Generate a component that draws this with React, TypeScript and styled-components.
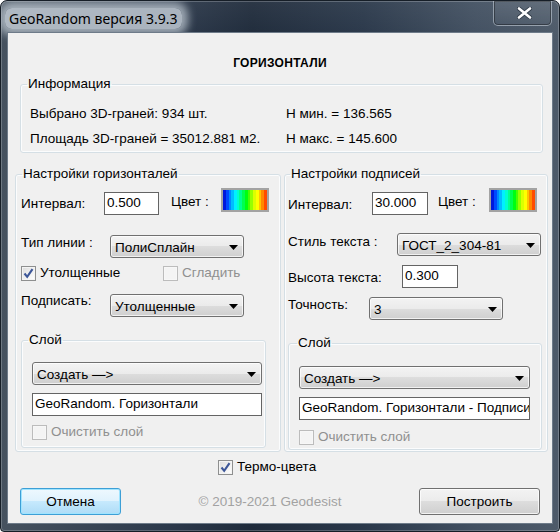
import styled, { createGlobalStyle } from 'styled-components';

const GlobalStyle = createGlobalStyle`
  html, body { margin: 0; padding: 0; background: #fff; }
  body {
    font-family: 'Liberation Sans', Arial, sans-serif;
    font-size: 13.5px;
    color: #000;
  }
  * { box-sizing: border-box; }
`;

const stripeColors = [
  '#0018dc', '#0048ff', '#0088ff', '#00bcff', '#00f0ff', '#00ffd0', '#00ff90', '#00ff50',
  '#00ff10', '#48ff00', '#98ff00', '#dcff00', '#ffff00', '#ffc400', '#ff8800', '#ff4c00',
];
const stripes = `linear-gradient(90deg, ${stripeColors
  .map((c, i) => `${c} ${((i * 100) / stripeColors.length).toFixed(2)}% ${(((i + 1) * 100) / stripeColors.length).toFixed(2)}%`)
  .join(', ')})`;

const Window = styled.div`
  width: 560px;
  height: 532px;
  display: flex;
  flex-direction: column;
  padding: 0 7px 8px;
  border: 1px solid #161e27;
  border-radius: 7px 7px 4px 4px;
  overflow: hidden;
  background:
    linear-gradient(180deg, rgba(255, 255, 255, 0.06), rgba(0, 0, 0, 0) 40px),
    linear-gradient(90deg, #46525f 0%, #2c394b 30%, #1f2b3b 45%, #2a384a 65%, #425061 85%, #4d5a69 100%);
  box-shadow: inset 0 0 0 1px rgba(255, 255, 255, 0.22);
`;

const TitleBar = styled.div`
  height: 32px;
  flex: none;
  display: flex;
  justify-content: space-between;
  align-items: flex-start;
`;

const Title = styled.span`
  margin: 7px 0 0 -3px;
  padding: 1px 4px;
  font-family: 'Noto Sans', 'Open Sans', sans-serif;
  font-size: 14px;
  line-height: 19px;
  color: #000;
  border-radius: 7px;
  background: rgba(204, 213, 222, 0.78);
  box-shadow: 0 0 8px 6px rgba(204, 213, 222, 0.7);
`;

const CloseButton = styled.div`
  width: 59px;
  height: 25px;
  display: flex;
  align-items: center;
  justify-content: center;
  padding-left: 3px;
  border: 1px solid rgba(200, 210, 220, 0.55);
  border-top: none;
  border-radius: 0 0 5px 5px;
  background: linear-gradient(180deg, rgba(255, 255, 255, 0.08), rgba(255, 255, 255, 0.02));
  box-shadow: inset 0 0 0 1px rgba(0, 0, 0, 0.35);
`;

const Client = styled.div`
  flex: 1;
  display: flex;
  flex-direction: column;
  background: #f0f0f0;
  box-shadow: 0 0 0 1px #6e7b89;
`;

const Heading = styled.div`
  padding-top: 22px;
  height: 38px;
  text-align: center;
  font-weight: bold;
  font-size: 12px;
  line-height: 16px;
  letter-spacing: 0.3px;
`;

const Group = styled.fieldset<{ $w: number; $mt?: number; $ml?: number; $pb?: number }>`
  margin: ${(p) => p.$mt ?? 0}px 0 0 ${(p) => p.$ml ?? 0}px;
  padding: 0 0 ${(p) => p.$pb ?? 0}px;
  width: ${(p) => p.$w}px;
  min-width: 0;
  border: 1px solid #d5dfe5;
  border-radius: 3px;
  box-shadow: inset 0 0 0 1px #fbfcfd;
`;

const Legend = styled.legend<{ $offset: number }>`
  margin-left: ${(p) => p.$offset}px;
  padding: 0 1px;
  line-height: 16px;
  font-size: 13.5px;
`;

const InfoGrid = styled.div`
  display: grid;
  grid-template-columns: 256px 1fr;
  row-gap: 9px;
  padding: 14px 0 5px 9px;
  line-height: 16px;
`;

const GroupsRow = styled.div`
  display: flex;
  gap: 3px;
  height: 286px;
  margin: 13px 0 0 7px;
`;

const Row = styled.div<{ $mt: number; $pl?: number; $h: number }>`
  display: flex;
  align-items: flex-start;
  height: ${(p) => p.$h}px;
  margin-top: ${(p) => p.$mt}px;
  padding-left: ${(p) => p.$pl ?? 0}px;
`;

const Label = styled.span<{ $w?: number; $mt?: number; $ml?: number }>`
  flex: none;
  width: ${(p) => (p.$w ? `${p.$w}px` : 'auto')};
  margin-top: ${(p) => p.$mt ?? 0}px;
  margin-left: ${(p) => p.$ml ?? 0}px;
  line-height: 16px;
  white-space: nowrap;
`;

const TextBox = styled.div<{ $w: number; $mt?: number; $ml?: number }>`
  flex: none;
  width: ${(p) => p.$w}px;
  height: 23px;
  margin-top: ${(p) => p.$mt ?? 0}px;
  margin-left: ${(p) => p.$ml ?? 0}px;
  padding: 2px 2px 0;
  line-height: 16px;
  background: #fff;
  border: 1px solid #646464;
  white-space: nowrap;
  overflow: hidden;
`;

const Swatch = styled.div`
  flex: none;
  width: 48px;
  height: 24px;
  border: 2px solid #a3a3a3;
  background: ${stripes};
`;

const Combo = styled.div<{ $w: number; $mt?: number; $ml?: number }>`
  flex: none;
  display: flex;
  align-items: center;
  justify-content: space-between;
  width: ${(p) => p.$w}px;
  height: 23px;
  margin-top: ${(p) => p.$mt ?? 0}px;
  margin-left: ${(p) => p.$ml ?? 0}px;
  padding: 1px 5px 0 4px;
  border: 1px solid #707070;
  border-radius: 3px;
  background: linear-gradient(180deg, #f3f3f3 0%, #ebebeb 50%, #dddddd 50%, #cfcfcf 100%);
  box-shadow: inset 0 0 0 1px rgba(255, 255, 255, 0.7);
  white-space: nowrap;
`;

const CheckWrap = styled.label<{ $w?: number; $disabled?: boolean; $mt?: number; $ml?: number }>`
  flex: none;
  display: flex;
  align-items: center;
  gap: 4px;
  width: ${(p) => (p.$w ? `${p.$w}px` : 'auto')};
  margin-top: ${(p) => p.$mt ?? 0}px;
  margin-left: ${(p) => p.$ml ?? 0}px;
  line-height: 16px;
  color: ${(p) => (p.$disabled ? '#8f8f8f' : '#000')};
`;

const CheckBox = styled.span<{ $disabled?: boolean }>`
  flex: none;
  width: 15px;
  height: 15px;
  display: flex;
  align-items: center;
  justify-content: center;
  border: 1px solid ${(p) => (p.$disabled ? '#bcbcbc' : '#8e8f8f')};
  background: ${(p) =>
    p.$disabled ? '#f4f4f4' : 'linear-gradient(135deg, #dcdcdc 0%, #f2f2f2 60%, #ffffff 100%)'};
  box-shadow: inset 0 0 0 1px ${(p) => (p.$disabled ? '#f7f7f7' : '#f4f4f4')};
`;

const BottomRow = styled.div`
  display: flex;
  justify-content: space-between;
  align-items: center;
  height: 27px;
  margin-top: 13px;
  padding: 0 12px;
`;

const Button = styled.div<{ $w: number; $primary?: boolean }>`
  width: ${(p) => p.$w}px;
  height: 27px;
  display: flex;
  align-items: center;
  justify-content: center;
  border-radius: 3px;
  border: 1px solid ${(p) => (p.$primary ? '#3d9fd6' : '#707070')};
  background: ${(p) =>
    p.$primary
      ? 'linear-gradient(180deg, #eef8fe 0%, #dff2fd 50%, #c6e9fd 50%, #aedcf7 100%)'
      : 'linear-gradient(180deg, #f3f3f3 0%, #ebebeb 50%, #dddddd 50%, #cfcfcf 100%)'};
  box-shadow: inset 0 0 0 1px ${(p) => (p.$primary ? '#9fe4ff' : 'rgba(255,255,255,0.75)')};
`;

const Copyright = styled.span`
  color: #a2a2a2;
  line-height: 16px;
`;

const Arrow = () => (
  <svg width="9" height="5" viewBox="0 0 9 5">
    <path d="M0 0 H9 L4.5 5 Z" fill="#000" />
  </svg>
);

const Check = ({ label, checked, disabled, w, mt, ml }: {
  label: string; checked?: boolean; disabled?: boolean; w?: number; mt?: number; ml?: number;
}) => (
  <CheckWrap $w={w} $disabled={disabled} $mt={mt} $ml={ml}>
    <CheckBox $disabled={disabled}>
      {checked && (
        <svg width="11" height="11" viewBox="0 0 11 11">
          <path d="M1.5 5.5 L4.2 8.8 L9.5 1.2" fill="none" stroke="#3c5698" strokeWidth="2.1" />
        </svg>
      )}
    </CheckBox>
    {label}
  </CheckWrap>
);

export default function App() {
  return (
    <>
      <GlobalStyle />
      <Window>
        <TitleBar>
          <Title>GeoRandom версия 3.9.3</Title>
          <CloseButton>
            <svg width="15" height="12" viewBox="0 0 15 12">
              <path d="M2 1.5 L13 10.5 M13 1.5 L2 10.5" stroke="#303b48" strokeWidth="4.2" strokeLinecap="round" />
              <path d="M2 1.5 L13 10.5 M13 1.5 L2 10.5" stroke="#fff" strokeWidth="2.6" strokeLinecap="round" />
            </svg>
          </CloseButton>
        </TitleBar>
        <Client>
          <Heading>ГОРИЗОНТАЛИ</Heading>
          <Group $w={523} $mt={5} $ml={12}>
            <Legend $offset={6}>Информация</Legend>
            <InfoGrid>
              <span>Выбрано 3D-граней: 934 шт.</span>
              <span>H мин. = 136.565</span>
              <span>Площадь 3D-граней = 35012.881 м2.</span>
              <span>H макс. = 145.600</span>
            </InfoGrid>
          </Group>

          <GroupsRow>
            <Group $w={266}>
              <Legend $offset={6}>Настройки горизонталей</Legend>
              <Row $mt={6} $pl={5} $h={27}>
                <Label $w={83} $mt={8}>Интервал:</Label>
                <TextBox $w={55} $mt={4}>0.500</TextBox>
                <Label $w={50} $ml={12} $mt={6}>Цвет :</Label>
                <Swatch />
              </Row>
              <Row $mt={20} $pl={5} $h={23}>
                <Label $w={89}>Тип линии :</Label>
                <Combo $w={134}>ПолиСплайн<Arrow /></Combo>
              </Row>
              <Row $mt={7} $pl={5} $h={15}>
                <Check label="Утолщенные" checked w={142} />
                <Check label="Сгладить" disabled />
              </Row>
              <Row $mt={13} $pl={5} $h={23}>
                <Label $w={89}>Подписать:</Label>
                <Combo $w={134} $mt={1}>Утолщенные<Arrow /></Combo>
              </Row>
              <Group $w={245} $mt={16} $ml={5} $pb={7}>
                <Legend $offset={6}>Слой</Legend>
                <Combo $w={230} $mt={14} $ml={10}>Создать —&gt;<Arrow /></Combo>
                <TextBox $w={230} $mt={8} $ml={10}>GeoRandom. Горизонтали</TextBox>
                <Check label="Очистить слой" disabled mt={8} ml={10} />
              </Group>
            </Group>

            <Group $w={264}>
              <Legend $offset={5}>Настройки подписей</Legend>
              <Row $mt={6} $pl={3} $h={27}>
                <Label $w={84} $mt={9}>Интервал:</Label>
                <TextBox $w={56} $mt={4}>30.000</TextBox>
                <Label $w={51} $ml={10} $mt={6}>Цвет :</Label>
                <Swatch />
              </Row>
              <Row $mt={18} $pl={3} $h={23}>
                <Label $w={109} $mt={1}>Стиль текста :</Label>
                <Combo $w={144}>ГОСТ_2_304-81<Arrow /></Combo>
              </Row>
              <Row $mt={9} $pl={3} $h={23}>
                <Label $w={114} $mt={5}>Высота текста:</Label>
                <TextBox $w={56}>0.300</TextBox>
              </Row>
              <Row $mt={9} $pl={3} $h={23}>
                <Label $w={81}>Точность:</Label>
                <Combo $w={134}>3<Arrow /></Combo>
              </Row>
              <Group $w={254} $mt={15} $ml={3} $pb={4}>
                <Legend $offset={8}>Слой</Legend>
                <Combo $w={231} $mt={15} $ml={10}>Создать —&gt;<Arrow /></Combo>
                <TextBox $w={231} $mt={8} $ml={10}>GeoRandom. Горизонтали - Подписи</TextBox>
                <Check label="Очистить слой" disabled mt={9} ml={10} />
              </Group>
            </Group>
          </GroupsRow>

          <Row $mt={7} $pl={210} $h={16}>
            <Check label="Термо-цвета" checked />
          </Row>

          <BottomRow>
            <Button $w={101} $primary>Отмена</Button>
            <Copyright>© 2019-2021 Geodesist</Copyright>
            <Button $w={121}>Построить</Button>
          </BottomRow>
        </Client>
      </Window>
    </>
  );
}
